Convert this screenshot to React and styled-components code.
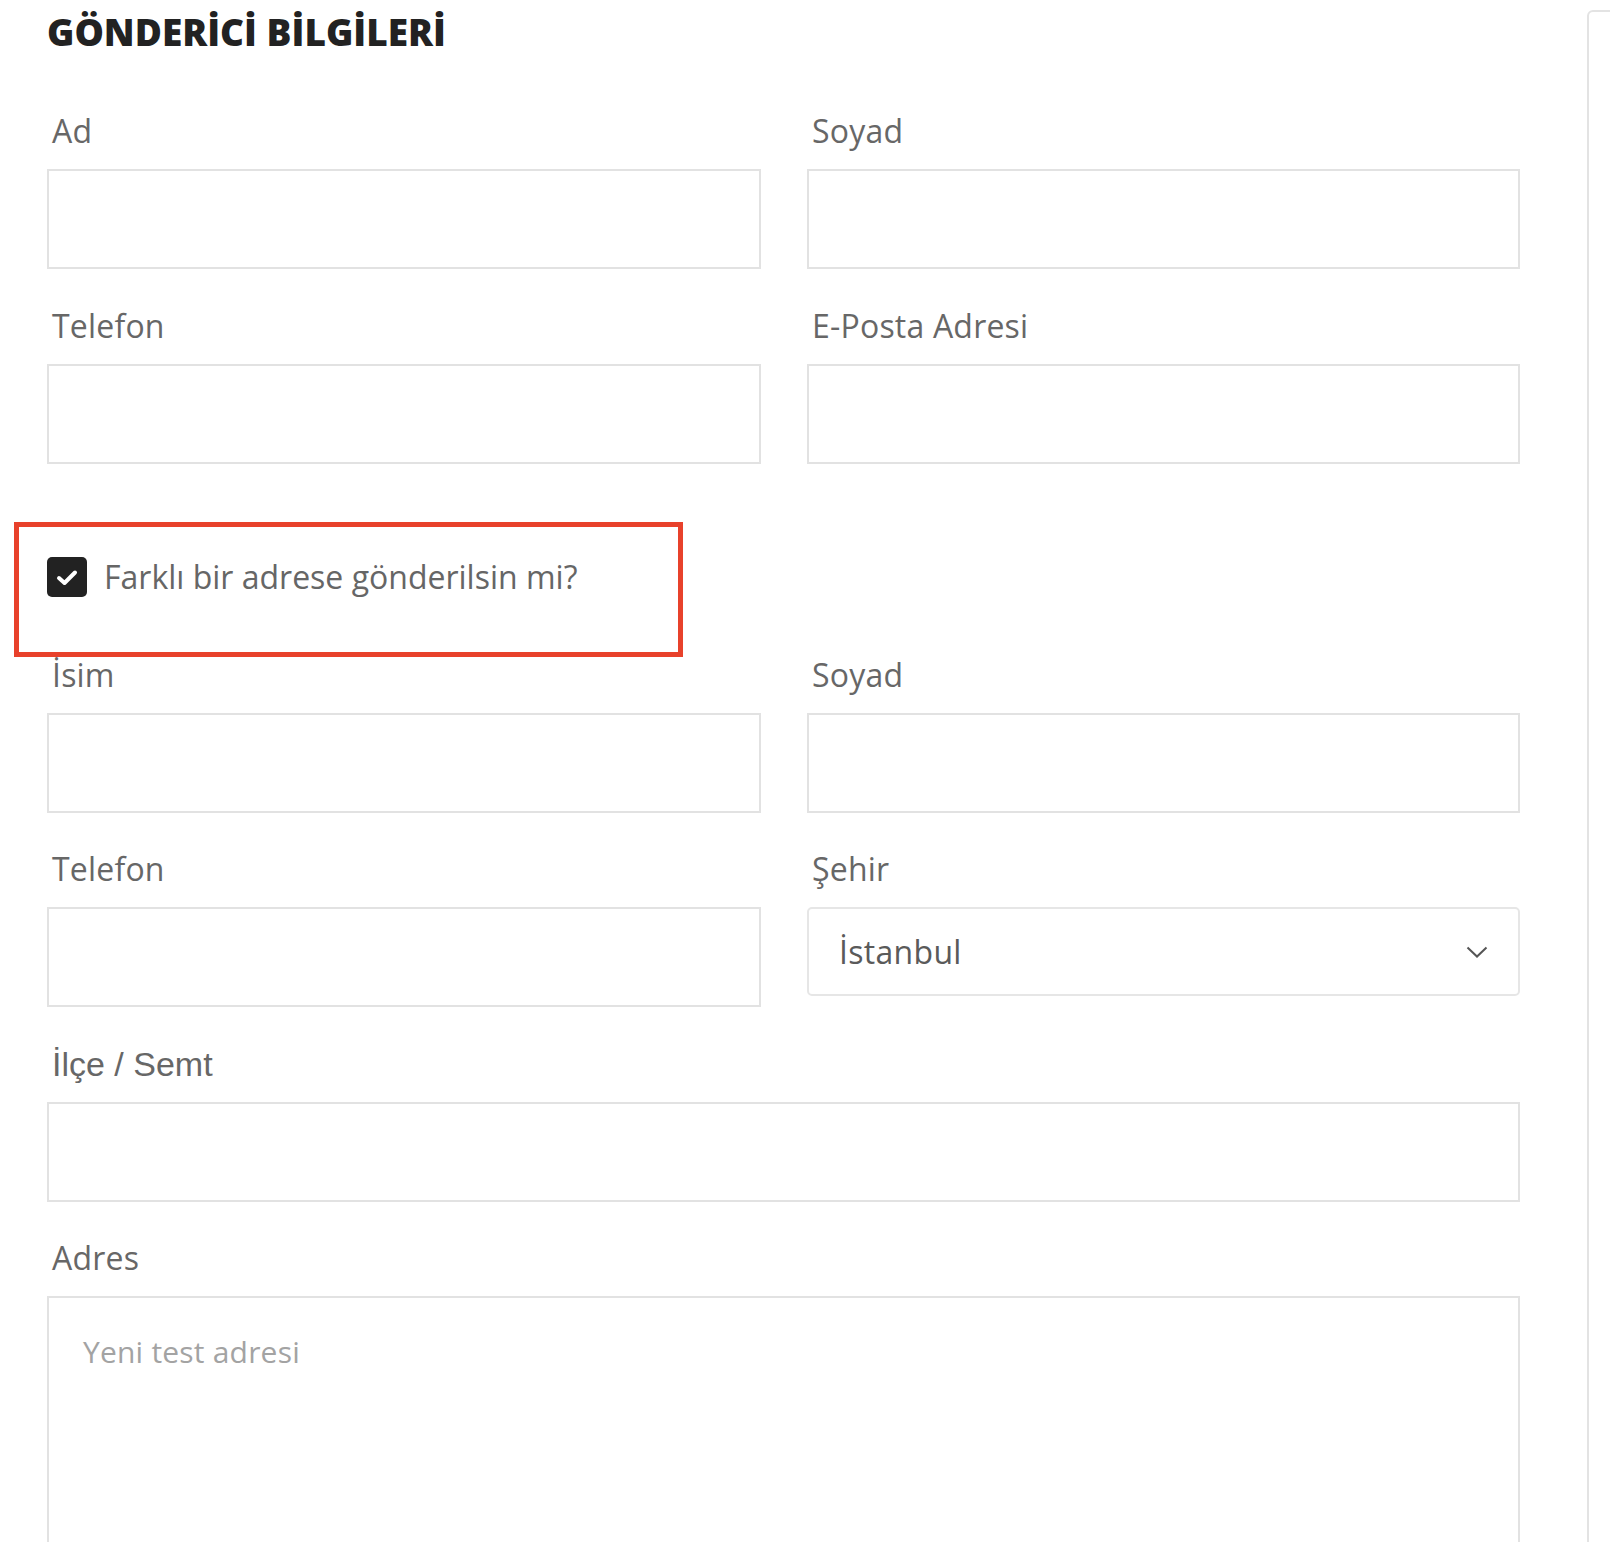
import React from "react";
import styled, { createGlobalStyle } from "styled-components";

const Global = createGlobalStyle`
  html, body {
    margin: 0;
    padding: 0;
    background: #ffffff;
    overflow: hidden;
  }
  body {
    font-family: "Open Sans", "Noto Sans", Arial, sans-serif;
  }
  * { box-sizing: border-box; }
`;

const Page = styled.div`
  display: flex;
  align-items: flex-start;
  height: 1542px;
  overflow: hidden;
  padding-left: 47px;
`;

const Form = styled.form`
  width: 1473px;
  flex-shrink: 0;
  display: flex;
  flex-direction: column;
`;

const Title = styled.h2`
  margin: 9px 0 0 0;
  font-family: "Open Sans", sans-serif;
  font-weight: 800;
  font-size: 37px;
  line-height: 45px;
  color: #222222;
  letter-spacing: 0;
`;

const Grid = styled.div`
  display: grid;
  grid-template-columns: 714px 713px;
  column-gap: 46px;
  row-gap: 36.5px;
  margin-top: ${(p) => p.$top || 0}px;
`;

const Field = styled.div`
  display: flex;
  flex-direction: column;
  grid-column: ${(p) => (p.$wide ? "1 / span 2" : "auto")};
`;

const Label = styled.label`
  display: block;
  padding-left: 5px;
  margin-bottom: 18px;
  font-family: ${(p) =>
    p.$arial ? '"Liberation Sans", Arial, sans-serif' : '"Open Sans", sans-serif'};
  font-size: ${(p) => (p.$arial ? 34 : 32)}px;
  line-height: 40px;
  letter-spacing: ${(p) => (p.$arial ? 0 : 0.2)}px;
  color: #676767;
`;

const Input = styled.input`
  display: block;
  width: 100%;
  height: 100px;
  border: 2px solid #e2e2e2;
  border-radius: 0;
  background: #fff;
  outline: none;
  padding: 0 32px;
  font-family: "Open Sans", sans-serif;
  font-size: 30px;
`;

const SelectBox = styled.div`
  display: flex;
  align-items: center;
  justify-content: space-between;
  height: 89px;
  border: 2px solid #e6e6e6;
  border-radius: 5px;
  padding: 0 30px 0 30px;
  font-family: "Open Sans", sans-serif;
  font-size: 32px;
  letter-spacing: 0.3px;
  color: #5a5a5a;
`;

const TextArea = styled.textarea`
  display: block;
  width: 100%;
  height: 320px;
  border: 2px solid #e2e2e2;
  border-radius: 0;
  outline: none;
  resize: none;
  padding: 34px 34px;
  font-family: "Open Sans", sans-serif;
  font-size: 30px;
  line-height: 40px;
  letter-spacing: 0.2px;
  &::placeholder {
    color: #a3a3a3;
  }
`;

const CheckSection = styled.div`
  position: relative;
  margin-top: 93px;
  margin-bottom: 58px;
`;

const CheckRow = styled.label`
  display: flex;
  align-items: center;
  gap: 17px;
  height: 40px;
  font-family: "Open Sans", sans-serif;
  font-size: 32px;
  color: #666666;
`;

const CheckBox = styled.span`
  display: flex;
  align-items: center;
  justify-content: center;
  width: 40px;
  height: 40px;
  border-radius: 5px;
  background: #222222;
  flex-shrink: 0;
`;

const Annotation = styled.div`
  position: absolute;
  left: -33px;
  top: -35px;
  width: 669px;
  height: 135px;
  border: 5px solid #e8412b;
  pointer-events: none;
`;

const SidePanel = styled.aside`
  flex-shrink: 0;
  margin-left: 67px;
  margin-top: 10px;
  width: 400px;
  height: 1700px;
  border: 2px solid #e3e3e3;
  border-radius: 6px;
`;

const Check = () => (
  <svg width="40" height="40" viewBox="0 0 40 40">
    <polyline
      points="12,21 17.5,26 28,15.5"
      fill="none"
      stroke="#ffffff"
      strokeWidth="4"
      strokeLinecap="round"
      strokeLinejoin="round"
    />
  </svg>
);

const Chevron = () => (
  <svg width="22" height="12" viewBox="0 0 22 12">
    <polyline
      points="1.5,1.5 11,10.5 20.5,1.5"
      fill="none"
      stroke="#555555"
      strokeWidth="2"
    />
  </svg>
);

export default function App() {
  return (
    <>
      <Global />
      <Page>
        <Form onSubmit={(e) => e.preventDefault()}>
          <Title>GÖNDERİCİ BİLGİLERİ</Title>
          <Grid $top={57}>
            <Field>
              <Label>Ad</Label>
              <Input type="text" />
            </Field>
            <Field>
              <Label>Soyad</Label>
              <Input type="text" />
            </Field>
            <Field>
              <Label>Telefon</Label>
              <Input type="tel" />
            </Field>
            <Field>
              <Label>E-Posta Adresi</Label>
              <Input type="email" />
            </Field>
          </Grid>

          <CheckSection>
            <CheckRow>
              <CheckBox>
                <Check />
              </CheckBox>
              Farklı bir adrese gönderilsin mi?
            </CheckRow>
            <Annotation />
          </CheckSection>

          <Grid>
            <Field>
              <Label>İsim</Label>
              <Input type="text" />
            </Field>
            <Field>
              <Label>Soyad</Label>
              <Input type="text" />
            </Field>
            <Field>
              <Label>Telefon</Label>
              <Input type="tel" />
            </Field>
            <Field>
              <Label>Şehir</Label>
              <SelectBox>
                <span>İstanbul</span>
                <Chevron />
              </SelectBox>
            </Field>
            <Field $wide>
              <Label $arial>İlçe / Semt</Label>
              <Input type="text" />
            </Field>
            <Field $wide>
              <Label>Adres</Label>
              <TextArea placeholder="Yeni test adresi" />
            </Field>
          </Grid>
        </Form>
        <SidePanel />
      </Page>
    </>
  );
}
